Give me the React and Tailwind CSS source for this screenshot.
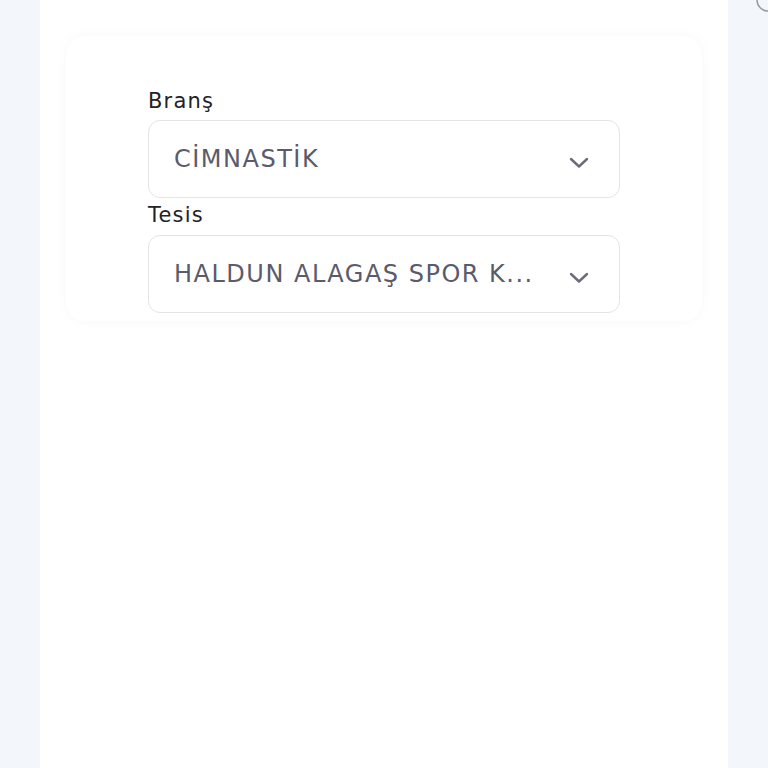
const FONT = { fontFamily: '"DejaVu Sans", "Noto Sans", sans-serif' };

function Chevron() {
  return (
    <svg className="mt-[8px]" width="20" height="12" viewBox="0 0 20 12" fill="none">
      <path d="M2 2 L10 9.5 L18 2" stroke="#6b6b7b" strokeWidth="2.4" strokeLinecap="round" strokeLinejoin="round" />
    </svg>
  );
}

function SelectBox({ value }) {
  return (
    <div className="flex items-center h-[78px] rounded-[12px] border border-[#e3e4e8] bg-white pl-[25px] pr-[30px]">
      <span className="flex-1 truncate text-[24px] text-[#5b5b6b] tracking-[1.5px]">{value}</span>
      <Chevron />
    </div>
  );
}

export default function App() {
  return (
    <div className="relative flex h-[768px] bg-[#f3f6fa] overflow-hidden" style={FONT}>
      <div className="ml-[40px] w-[688px] bg-white">
        <div className="mx-[26px] mt-[36px] rounded-[20px] bg-white shadow-[0_0_14px_rgba(30,40,60,0.03)] px-[82px] pt-[50px] pb-[8px]">
          <div className="text-[21px] leading-[30px] text-[#222228] tracking-[1.2px]">Branş</div>
          <div className="mt-[4px]">
            <SelectBox value="CİMNASTİK" />
          </div>
          <div className="text-[21px] leading-[30px] text-[#222228] tracking-[1.2px] mt-[2px]">Tesis</div>
          <div className="mt-[5px]">
            <SelectBox value="HALDUN ALAGAŞ SPOR K..." />
          </div>
        </div>
      </div>
      <svg className="absolute right-[-14px] top-[-14px]" width="28" height="28" viewBox="0 0 28 28">
        <circle cx="14" cy="14" r="11" fill="none" stroke="#9a9aa4" strokeWidth="1.5" />
      </svg>
    </div>
  );
}
